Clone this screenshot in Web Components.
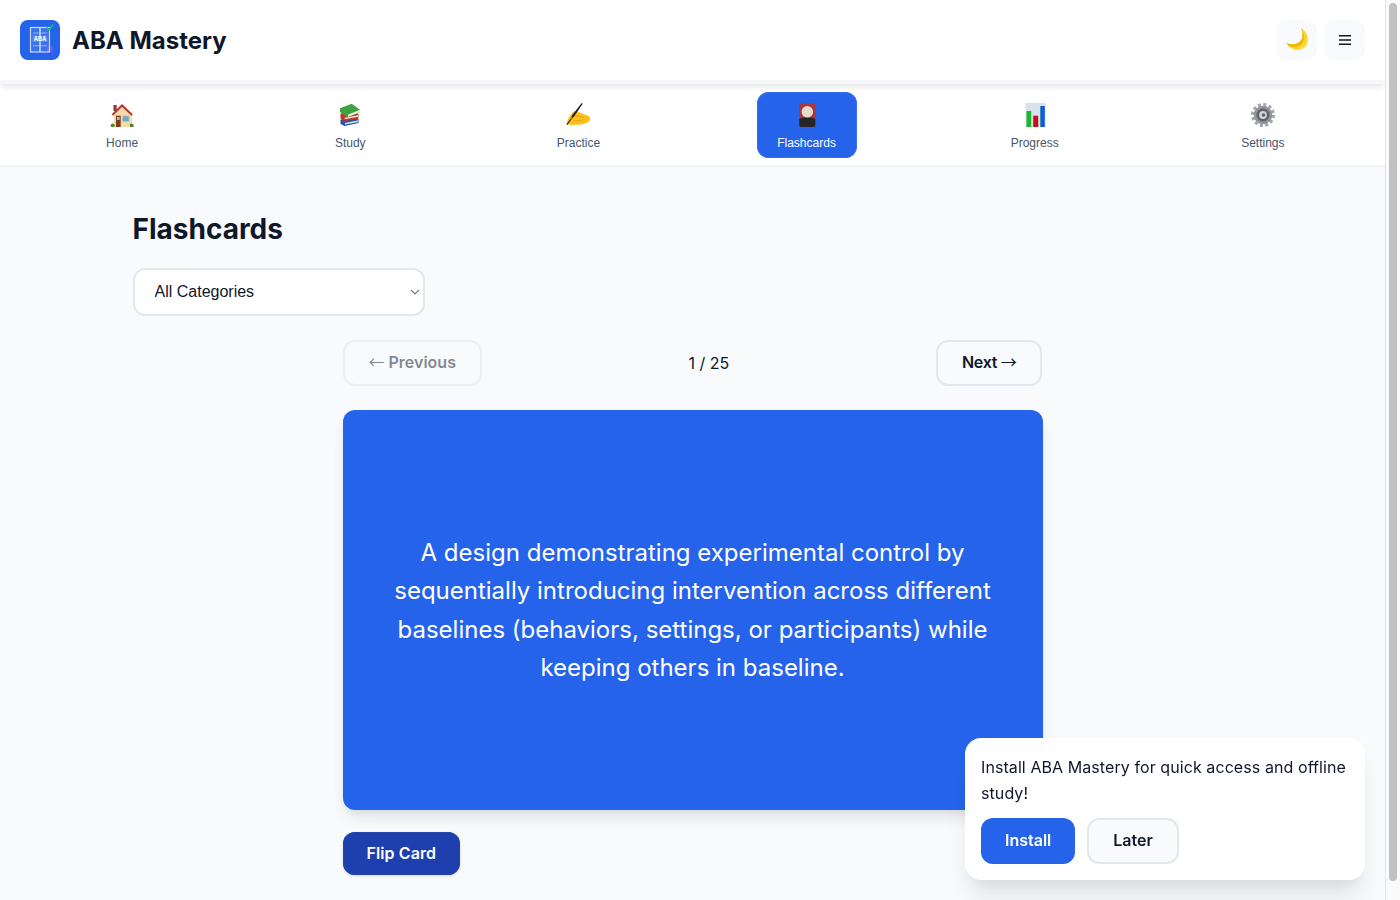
<!DOCTYPE html>
<html lang="en"><head><meta charset="utf-8"><title>ABA Mastery</title>
<style>
html,body{margin:0;padding:0}
body{margin-right:15px;background:#f8fafc;color:#0f172a;font-family:Inter,"Noto Sans",sans-serif;font-size:16px;line-height:1.6}
svg{display:block}
</style></head><body>
<aba-header></aba-header>
<aba-nav>
  <aba-nav-item label="Home"><svg width="24" height="24" viewBox="0 0 24 24"><path d="M3.500 2h3.200v6H3.500z" fill="#8f3a2b"/><path d="M4 11v13h18V11l-9-8z" fill="#f2dcae"/><path d="M1.700 11.300L12 .9l10.800 10.400-1.300 1.400L12 4 3 12.700z" fill="#b5392c"/><path d="M6 12.700h4.700V24H6z" fill="#7d3d22"/><path d="M7 14h2.700v3H7z" fill="#8cc6e8"/><path d="M12.300 12.700h7v6h-7z" fill="#dcb97f"/><path d="M13 13.300h5.700v4.800H13z" fill="#63a9de"/><circle cx="2.700" cy="22.500" r="2" fill="#55892b"/><circle cx="21.700" cy="22.500" r="2" fill="#55892b"/></svg></aba-nav-item>
  <aba-nav-item label="Study"><svg width="24" height="24" viewBox="0 0 24 24"><path d="M2.500 16.500l15-2 3 1.500v4l-14 3-4-2z" fill="#2b55a5"/><path d="M7 20l13-2.500v1.500L7 21.500z" fill="#e6e8ee"/><path d="M2.500 10.500l14-1.500 4 2v4.500l-14 2.500-4-2.500z" fill="#d0321f"/><path d="M6.700 14.700l13.500-2.500v1.600L6.700 16.200z" fill="#f2e9dc"/><path d="M2 5.300L13.700.8 22 6.700v2.300L10 14.500 2 9z" fill="#3fa142"/><path d="M10 11.700L22 6.700v2.200L10 14z" fill="#eef0e8"/></svg></aba-nav-item>
  <aba-nav-item label="Practice"><svg width="24" height="24" viewBox="0 0 24 24"><path d="M1 21.500C.8 18 2.500 14.500 4.500 12 6 10 7.500 8 9.500 8c1.800 0 3.500 1.300 5.500 2l6.500 2.500c1.700.7 3 2.300 2.700 4-.3 2-2.700 3.300-5 4-3 .9-6 1.200-9 1.300-2.800.1-6 .2-8.700-.3z" fill="#fcc21b"/><path d="M9.500 13c3-.3 6 .7 9 2.200M8 17.700c3 .6 6 .2 9-.9" stroke="#e39c10" stroke-width=".9" fill="none"/><path d="M15.700 0l1 .8L8 13.500 5.200 16.300l.7-3.500z" fill="#1d1d1f"/><path d="M5.200 16L.8 21.700" stroke="#1d1d1f" stroke-width="1.100"/></svg></aba-nav-item>
  <aba-nav-item label="Flashcards" active><svg width="24" height="24" viewBox="0 0 24 24"><rect x="4.300" y="0" width="16" height="24" rx="2" fill="#a8363e"/><path d="M4.300 16c2-1.200 4.500-1.700 8-1.700s6 .5 8 1.700v6a2 2 0 0 1-2 2h-12a2 2 0 0 1-2-2z" fill="#262626"/><circle cx="12.300" cy="8.800" r="5.800" fill="#e4dccb"/></svg></aba-nav-item>
  <aba-nav-item label="Progress"><svg width="24" height="24" viewBox="0 0 24 24"><rect x="2.500" y="0" width="20" height="24" fill="#d8e2ea"/><rect x="3.500" y="8" width="4.700" height="16" fill="#19b82e"/><rect x="10.200" y="12.700" width="5" height="11.300" fill="#c80f14"/><rect x="17.300" y="3" width="4.500" height="21" fill="#0a5fd0"/></svg></aba-nav-item>
  <aba-nav-item label="Settings"><svg width="24" height="24" viewBox="0 0 24 24"><circle cx="12" cy="12" r="10" fill="none" stroke="#a3a6ab" stroke-width="4" stroke-dasharray="2.900 2.336"/><circle cx="12" cy="12" r="9.300" fill="#92959b"/><circle cx="12" cy="12" r="6.500" fill="#5f6267"/><circle cx="12" cy="12" r="3.900" fill="#d2d3d6"/><circle cx="12.500" cy="12" r="1.700" fill="#5a5d63"/></svg></aba-nav-item>
</aba-nav>
<aba-main>
  <aba-flashcards></aba-flashcards>
</aba-main>
<aba-install></aba-install>
<aba-scrollbar></aba-scrollbar>
<script>
function def(name, css, html){
  customElements.define(name, class extends HTMLElement{
    constructor(){super();const r=this.attachShadow({mode:'open'});
      r.innerHTML='<style>'+css+'</style>'+html;}
    connectedCallback(){
      this.shadowRoot.querySelectorAll('[data-attr]').forEach(e=>{e.textContent=this.getAttribute(e.dataset.attr)||''});
      if(this.hasAttribute('active'))this.shadowRoot.querySelector('.b').classList.add('on');
    }
  });
}
const btnCss=`button{font:600 16px/1.6 Inter,sans-serif;border-radius:12px;cursor:pointer;box-sizing:border-box}
.ar{font-family:"Noto Sans CJK JP",sans-serif;font-weight:400;line-height:1}`;
def('aba-header',`
:host{display:flex;align-items:center;justify-content:space-between;height:84px;box-sizing:border-box;padding:20px;background:#fff;border-bottom:4px solid #f5f7fa;box-shadow:0 4px 6px -1px rgba(0,0,0,.1);position:relative;z-index:2}
.brand{display:flex;align-items:center;gap:12px}
svg{display:block}
h1{margin:0;padding-top:2px;font:700 24px/1.6 Inter,sans-serif;color:#0f172a}
.acts{display:flex;gap:8px}
button{width:40px;height:40px;border:0;background:#f8fafc;border-radius:10px;padding:0;display:flex;align-items:center;justify-content:center;color:#0f172a}
`,`<div class="brand">
<svg width="40" height="40" viewBox="0 0 40 40"><rect width="40" height="40" rx="8" fill="#2563eb"/>
<circle cx="30" cy="29" r="3.500" fill="#7c5cf0" opacity=".6"/>
<rect x="10.500" y="7.500" width="19" height="24.500" fill="#fff" fill-opacity=".1" stroke="#c9d8fb" stroke-width="1.200"/>
<path d="M20 7.500V32" stroke="#dbe6fd" stroke-width="1.400"/>
<path d="M13 13h14M13 25.700h14" stroke="#a9c1f8" stroke-width=".8"/>
<rect x="12.500" y="15.500" width="15" height="6.500" fill="#6f9af3" opacity=".6"/>
<text x="20" y="21" text-anchor="middle" font-family="Inter,sans-serif" font-size="5.800" font-weight="700" fill="#fff">ABA</text>
<path d="M26.700 7.500l2.200 2.500 4.400-5.800" fill="none" stroke="#10b981" stroke-width="1.800"/></svg>
<h1>ABA Mastery</h1></div>
<div class="acts"><button aria-label="Theme"><svg width="24" height="24" viewBox="0 0 24 24"><path d="M15.700 0C20 2 23 7 23 11.500 23 17.500 18 22 12 22 7.500 22 3.500 19 1.700 14.700 5 16.500 9 17 13 15 18 12.500 19 5 15.700 0z" fill="#fdd835"/><path d="M15.700 0C19 5 18 12.500 13 15 9 17 5 16.500 1.700 14.700 2.200 16 3 17 3.700 18 7 19.500 11 19.500 15 17.500 20 14.500 21 6 15.700 0z" fill="#f4b400"/></svg></button><button aria-label="Menu"><svg width="12" height="12" viewBox="0 0 12 12"><path d="M0 1.700h12M0 6h12M0 10.300h12" stroke="#0f172a" stroke-width="1.400"/></svg></button></div>`);
def('aba-nav',`
:host{display:flex;justify-content:space-around;height:83px;box-sizing:border-box;padding:8px;background:#fff;border-bottom:2px solid #f1f5f9}
`,`<slot></slot>`);
def('aba-nav-item',`
:host{display:block;width:100px}
.b{box-sizing:border-box;height:66px;border-radius:12px;display:flex;flex-direction:column;align-items:center;padding:11px 0 0;color:#475569;font:12px/18px "Liberation Sans",Arial,sans-serif}
.i{height:24px;margin-bottom:7px}
.on{background:#2563eb;color:#fff;box-shadow:inset 0 0 0 1px #3270ee}
`,`<div class="b"><span class="i"><slot></slot></span><span data-attr="label"></span></div>`);
def('aba-main',`
:host{display:block;max-width:1120px;margin:0 auto;padding:40px 40px 48px}
`,`<slot></slot>`);
def('aba-flashcards',btnCss+`
:host{display:block}
h2{margin:0 0 16px;font:700 28px/1.6 Inter,sans-serif;color:#0f172a}
select{display:block;width:292px;height:48px;box-sizing:border-box;padding:0 16px 0 20px;border:2px solid #e2e8f0;border-radius:12px;background:#fff url("data:image/svg+xml,%3Csvg xmlns='http://www.w3.org/2000/svg' width='10' height='6'%3E%3Cpath d='M1 1l4 4 4-4' fill='none' stroke='%23717b8a' stroke-width='1.100'/%3E%3C/svg%3E") no-repeat right 3px center;appearance:none;color:#0f172a;font:16px "Liberation Sans",Arial,sans-serif;margin-bottom:24px}
.wrap{width:700px;margin:0 auto}
.ctl{display:flex;align-items:center;justify-content:space-between;margin-bottom:24px}
.ctl span.c{padding-top:2px}
.ctl button{height:46px;padding:0 24px;background:#f8fafc;border:2px solid #e2e8f0;color:#0f172a}
.ctl button:disabled{opacity:.5;cursor:default}
.nx{letter-spacing:-.3px}
.card{height:400px;box-sizing:border-box;padding:50px 48px 48px;background:#2563eb;color:#fff;border-radius:12px;display:flex;align-items:center;justify-content:center;text-align:center;font:24px/1.6 Inter,sans-serif;box-shadow:0 10px 15px -3px rgba(0,0,0,.1),0 4px 6px -2px rgba(0,0,0,.05)}
.flip{display:block;margin-top:22px;height:43px;padding:0 24px;background:#1e40af;color:#fff;border:0;letter-spacing:.1px;box-shadow:inset 0 0 0 1px #2445ac,0 1px 3px rgba(0,0,0,.15)}
`,`<h2>Flashcards</h2>
<select aria-label="Category"><option>All Categories</option></select>
<div class="wrap">
<div class="ctl"><button disabled><span class="ar">←</span> Previous</button><span class="c">1 / 25</span><button class="nx">Next <span class="ar">→</span></button></div>
<div class="card">A design demonstrating experimental control by sequentially introducing intervention across different baselines (behaviors, settings, or participants) while keeping others in baseline.</div>
<button class="flip">Flip Card</button>
</div>`);
def('aba-install',btnCss+`
:host{position:fixed;right:35px;bottom:20px;width:400px;box-sizing:border-box;padding:16px;background:#fff;border-radius:16px;box-shadow:0 20px 25px -5px rgba(0,0,0,.1),0 10px 10px -5px rgba(0,0,0,.04);z-index:5;color:#0f172a}
p{margin:0 0 12px;height:52px;font:16px/26px Inter,sans-serif;letter-spacing:.08px}
.r{display:flex;gap:12px}
button{height:46px;padding:0 24px}
.a{background:#2563eb;color:#fff;border:0}
.b{background:#f8fafc;color:#0f172a;border:2px solid #e2e8f0}
`,`<p>Install ABA Mastery for quick access and offline study!</p><div class="r"><button class="a">Install</button><button class="b">Later</button></div>`);
def('aba-scrollbar',`
:host{position:fixed;top:0;right:0;bottom:0;width:15px;box-sizing:border-box;background:#fafafa;border-left:1px solid #e6e6e6;z-index:9;padding:3px 3px 19px 3px}
div{height:100%;background:#c1c1c1;border-radius:4px}
`,`<div></div>`);
</script>
</body></html>
